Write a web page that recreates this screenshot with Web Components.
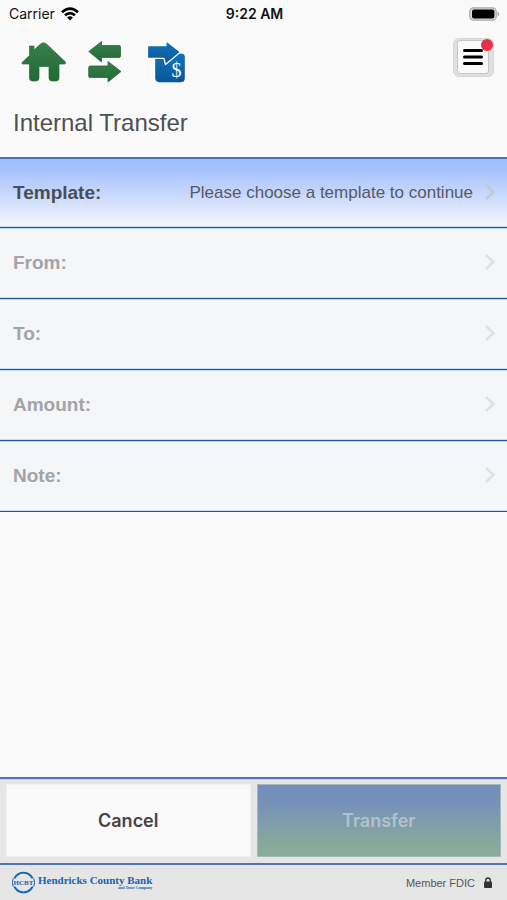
<!DOCTYPE html>
<html lang="en">
<head>
<meta charset="utf-8">
<meta name="viewport" content="width=device-width, initial-scale=1">
<title>Internal Transfer</title>
<style>
  html, body { margin: 0; height: 100%; }
  body { background: #fafafa; color: #4a4a4a; font-family: "Liberation Sans", Arial, sans-serif; }
</style>
</head>
<body>
<transfer-page></transfer-page>
<script>
const define = (name, html) => {
  const template = document.createElement('template');
  template.innerHTML = '<style>*{box-sizing:border-box}button{font:inherit;color:inherit;margin:0;border:0;padding:0;background:none}svg{display:block}</style>' + html;
  customElements.define(name, class extends HTMLElement {
    constructor() {
      super();
      this.attachShadow({ mode: 'open' }).append(template.content.cloneNode(true));
    }
  });
};

define('status-bar', `
  <style>
    :host { display: grid; grid-template-columns: 1fr auto 1fr; align-items: center; height: 28px; padding: 0 7px 0 9px; color: #111; font: 14px/28px Inter, sans-serif; }
    .left { display: flex; align-items: center; gap: 6px; }
    .time { font-weight: 600; }
    .battery { justify-self: end; }
  </style>
  <div class="left"><span>Carrier</span>
    <svg width="18" height="14" viewBox="0 0 18 14" fill="none" stroke="#000" stroke-width="2.6"><path d="M1 5.2Q9-2 17 5.2M4 8.3Q9 3.8 14 8.3"/><path d="M9 13.4 6.1 10.4Q9 8 11.9 10.4Z" fill="#000" stroke="none"/></svg>
  </div>
  <span class="time">9:22 AM</span>
  <svg class="battery" width="31" height="14" viewBox="0 0 31 14"><rect x=".8" y=".8" width="26.4" height="12.4" rx="3.8" fill="#ddd" stroke="#aaa" stroke-width="1.2"/><rect x="3" y="2.6" width="22.4" height="8.8" rx="2" fill="#000"/><path d="M28.5 4.5Q32 7 28.5 9.5Z" fill="#aaa"/></svg>`);

define('nav-bar', `
  <style>
    :host { display: flex; align-items: flex-start; justify-content: space-between; height: 68px; padding: 10px 13px 0 21px; }
    nav { display: flex; gap: 21px; padding-top: 2px; }
    .menu { position: relative; width: 41px; height: 39px; border: 1px solid #d6d6d6; border-radius: 6px; background: #e0e0e0; padding: 1px 4px 2px 3px; }
    .face { display: grid; place-items: center; height: 100%; border: 1px solid #c4c4c4; border-radius: 3px; background: #fafafa; }
    .dot { position: absolute; top: 0; right: 0; width: 12px; height: 12px; border-radius: 50%; background: #e8304a; }
  </style>
  <nav>
    <button aria-label="Home"><svg width="46" height="44" viewBox="0 0 46 44"><defs><linearGradient id="g" x2="0" y2="1"><stop stop-color="#37804a"/><stop offset="1" stop-color="#216a36"/></linearGradient></defs><path fill="url(#g)" stroke="#286b39" stroke-width=".7" d="M8.500 6H13V10L19 4.500Q22.500 1 26 4.500L44.500 22Q45 24 43.500 24H38V38Q38 41 35 41H31Q28 41 28 38V26.500H18V38Q18 41 15 41H11.500Q8.500 41 8.500 38V24H2Q.5 24 1 22.500L8.500 15.500Z"/></svg></button>
    <button aria-label="Transfers"><svg width="34" height="44" viewBox="0 0 34 44"><defs><linearGradient id="g" x2="0" y2="1"><stop stop-color="#37804a"/><stop offset="1" stop-color="#216a36"/></linearGradient></defs><g fill="url(#g)" stroke="#286b39" stroke-width=".8" stroke-linejoin="round"><path d="M.8 11.500 13.500 1.500V5.500H31Q32.500 5.500 32.500 7V16Q32.500 17.500 31 17.500H13.500V22Z"/><path d="M2 26H20V21.500L33 31.500 20 42V37.500H2Q.7 37.500 .7 36V27.500Q.7 26 2 26Z"/></g></svg></button>
    <button aria-label="Internal transfer"><svg width="44" height="44" viewBox="-4 0 44 44"><defs><linearGradient id="b" x2="0" y2="1"><stop stop-color="#1273b8"/><stop offset="1" stop-color="#085798"/></linearGradient></defs><path fill="url(#b)" stroke="#0b5c9d" stroke-width=".6" d="M8.500 17H17V24L31 14H35Q37.500 14 37.500 17V38.500Q37.500 42 34 42H12.500Q8.500 42 8.500 38Z"/><path fill="url(#b)" stroke="#fafafa" stroke-width="1.200" stroke-linejoin="round" d="M2 5.700H19V.7L33.500 12 18.500 24.500 17 18.400H2Q.5 18.400 .5 17V7Q.5 5.700 2 5.700Z"/><text x="29.500" y="37" text-anchor="middle" fill="#fafafa" font-family="Liberation Serif, serif" font-size="20">$</text></svg></button>
  </nav>
  <button class="menu" aria-label="Menu"><span class="face"><svg width="20" height="18" viewBox="0 0 20 18" stroke="#000" stroke-width="3" stroke-linecap="round"><path d="M1.500 2.500H18.500M1.500 9H18.500M1.500 15.500H18.500"/></svg></span><span class="dot"></span></button>`);

define('field-row', `
  <style>
    :host { display: block; color: #a3a4a6; background: #f4f6f8; border-top: 1px solid #bcd8f5; border-bottom: 1px solid #25549f; }
    :host([active]) { color: #4a4d54; background: linear-gradient(#a0beff, #a8c3fd 18%, #f3f6fb 98%); border-top: 2px solid #4a72b5; }
    button { display: flex; align-items: center; width: 100%; height: 69px; padding: 0 12px 0 13px; text-align: left; border-bottom: 1px solid #c4dcf6; }
    :host([active]) button { height: 68px; }
    .label { font-size: 19px; font-weight: 700; line-height: 24px; }
    .value { flex: 1; text-align: right; font-size: 17px; line-height: 24px; padding-right: 12px; color: #555b66; }
    svg { fill: none; stroke: #dfe0e2; stroke-width: 2.500; margin-bottom: 2px; }
    :host([active]) svg { stroke: #c3c7d0; }
  </style>
  <button><span class="label"><slot name="label"></slot></span><span class="value"><slot></slot></span>
  <svg width="10" height="16" viewBox="0 0 10 16"><path d="M1 1 8.500 8 1 15"/></svg></button>`);

define('action-bar', `
  <style>
    :host { display: grid; grid-template-columns: 1fr 1fr; gap: 6px; padding: 5px 6px 6px; background: #e6e6e6; border-top: 2px solid #5374b4; border-bottom: 2px solid #5374b4; box-shadow: inset 0 1px #c5d9f3; }
    button { height: 73px; font: 600 18px/24px Inter, sans-serif; }
    .cancel { background: #fafafa; border: 1px solid #f0f0f0; color: #444; }
    .transfer { background: linear-gradient(#718dbd, #7592b8 25%, #88aa9c 85%, #8aac99); border: 1px solid #a8b6bd; color: #b3c1cd; }
  </style>
  <button class="cancel">Cancel</button><button class="transfer">Transfer</button>`);

define('bank-logo', `
  <style>
    :host { display: flex; align-items: center; gap: 3px; color: #1764ab; font-family: "Liberation Serif", serif; }
    .name { display: flex; flex-direction: column; font-weight: 700; }
    .main { font-size: 11px; line-height: 11px; }
    .sub { font-size: 4px; line-height: 4px; text-align: right; }
  </style>
  <svg width="23" height="23" viewBox="0 0 23 23"><circle cx="11.500" cy="11.500" r="9.900" fill="none" stroke="#1764ab" stroke-width="1.800"/><path d="M0 7.500H23V15.500H0Z" fill="#e6e6e6"/><path d="M1.200 7.500Q-.5 11.500 1.200 15.500M21.800 7.500Q23.500 11.500 21.800 15.500" fill="none" stroke="#1764ab"/><text x="11.500" y="14.200" text-anchor="middle" font-size="7" font-weight="700" fill="#1764ab">HCBT</text></svg>
  <span class="name"><span class="main">Hendricks County Bank</span><span class="sub">and Trust Company</span></span>`);

define('page-footer', `
  <style>
    :host { display: flex; align-items: center; justify-content: space-between; height: 35px; padding: 0 15px 0 12px; background: #e6e6e6; }
    .member { display: flex; align-items: center; gap: 9px; font-size: 11px; line-height: 16px; color: #555; }
  </style>
  <bank-logo></bank-logo>
  <span class="member">Member FDIC <svg width="8" height="11" viewBox="0 0 8 11"><path d="M1.800 5V3.200Q1.800 1 4 1T6.200 3.200V5" fill="none" stroke="#333" stroke-width="1.400"/><rect y="4.600" width="8" height="6.400" rx="1" fill="#333"/></svg></span>`);

define('transfer-page', `
  <style>
    :host { display: flex; flex-direction: column; min-height: 100vh; }
    h1 { margin: 0; padding: 13px 13px 20px; font-size: 24px; line-height: 28px; font-weight: 400; color: #505050; }
    main { flex: 1; }
  </style>
  <status-bar></status-bar>
  <nav-bar></nav-bar>
  <main>
    <h1>Internal Transfer</h1>
    <field-row active><span slot="label">Template:</span>Please choose a template to continue</field-row>
    <field-row><span slot="label">From:</span></field-row>
    <field-row><span slot="label">To:</span></field-row>
    <field-row><span slot="label">Amount:</span></field-row>
    <field-row><span slot="label">Note:</span></field-row>
  </main>
  <action-bar></action-bar>
  <page-footer></page-footer>`);
</script>
</body>
</html>
